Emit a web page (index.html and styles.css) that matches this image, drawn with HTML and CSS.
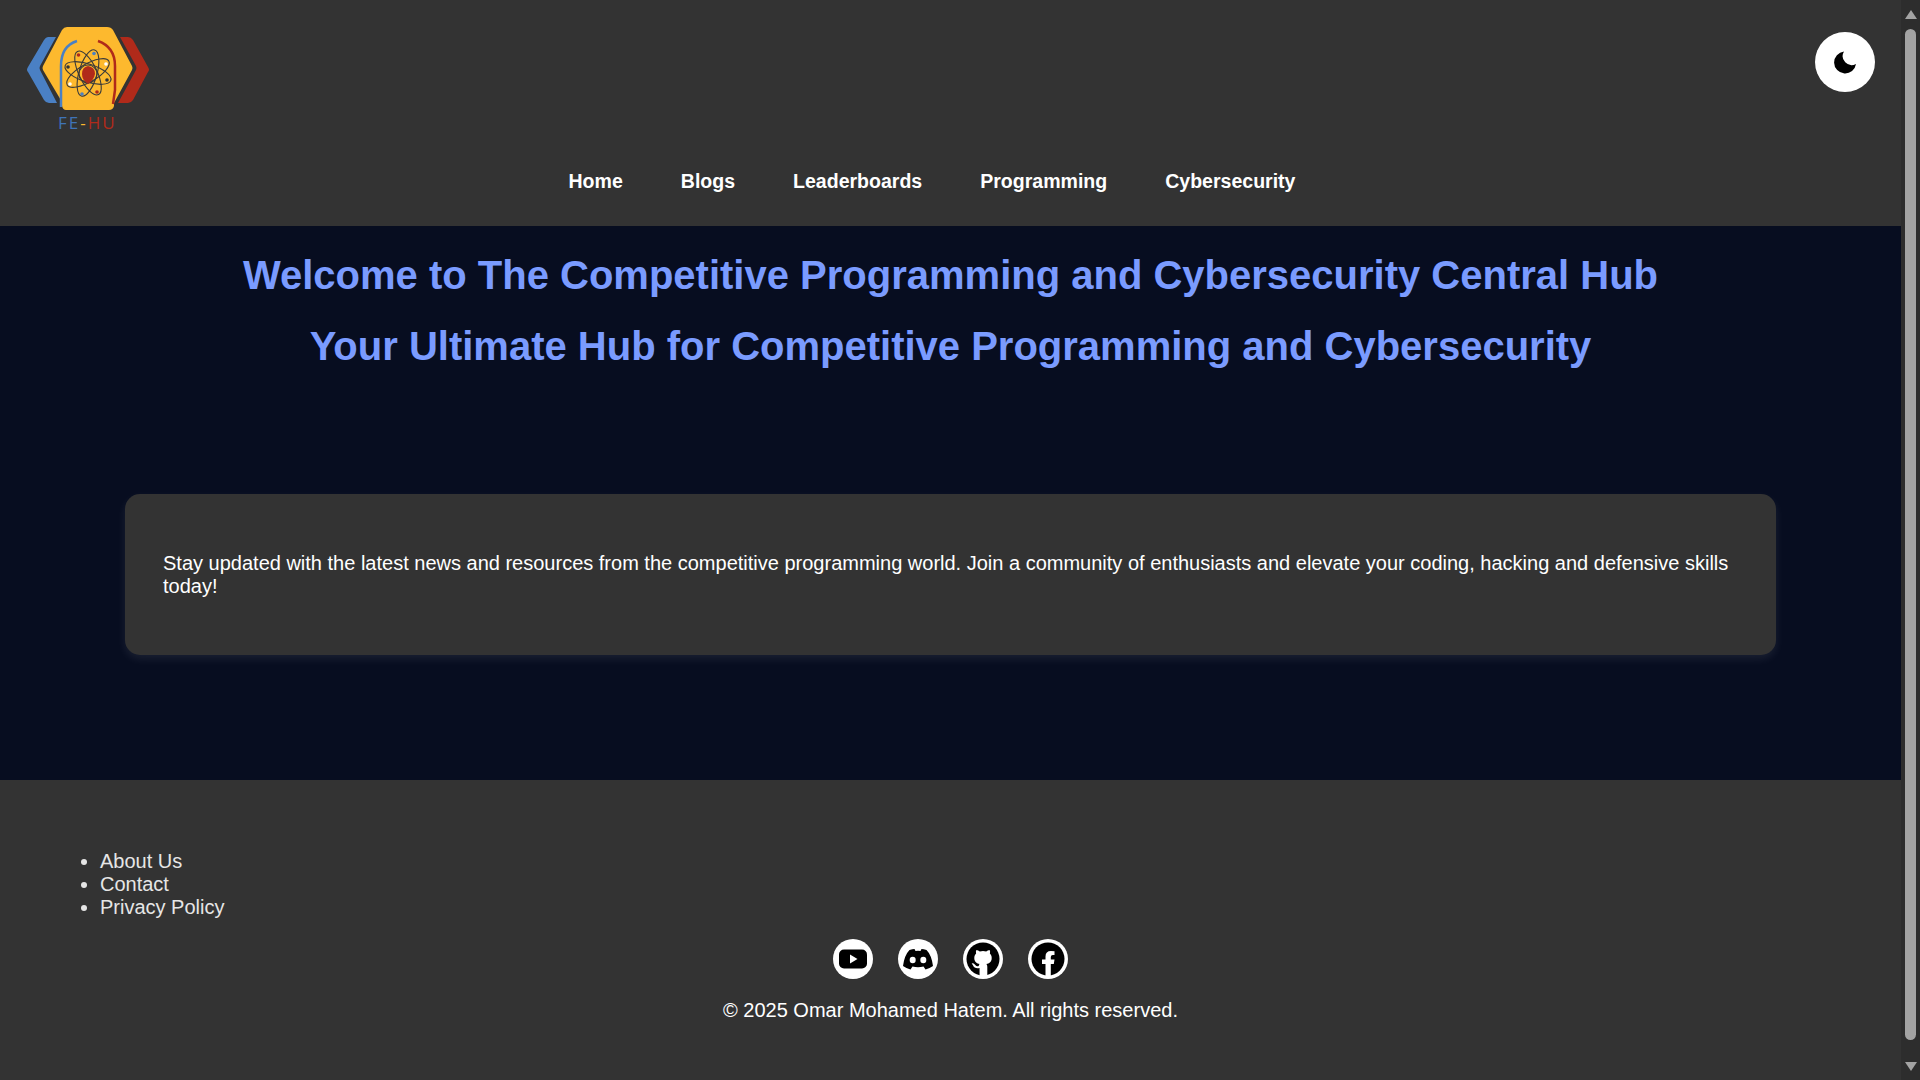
FILE: index.html
```html
<!DOCTYPE html>
<html lang="en">
<head>
<meta charset="utf-8">
<title>FE-HU</title>
<link rel="stylesheet" href="styles.css">
</head>
<body>
<div class="page">
  <header class="header">
    <div class="top">
      <a class="logo" href="#">
        <svg class="logo-mark" width="130" height="92" viewBox="23 23 130 92">
          <path d="M48 37 H56 L40 66 Q39 68 40 70 L57 103 H49 Q46 103 44 100 L28 72 Q26 70 28 67 L44 40 Q46 37 48 37Z" fill="#4a80c4"/>
          <path d="M120 37 H128 Q131 37 133 40 L148 67 Q150 70 148 72 L133 100 Q131 103 128 103 H118 L136 70 Q137 68 136 66Z" fill="#b02a1a"/>
          <path d="M67 27 H107 Q111 27 113 30 L132 66 Q133 68 132 70 L114 103 V106 Q113 110 109 110 H66 Q63 110 62 106 V102 L43 70 Q42 68 43 66 L62 30 Q64 27 67 27Z" fill="#fdb92e"/>
          <path d="M77 41 Q61 46 61 66 V107" fill="none" stroke="#4a80c4" stroke-width="2.500"/>
          <path d="M98 41 Q115 47 115 66 V90 L113 104" fill="none" stroke="#b02a1a" stroke-width="2.500"/>
          <g fill="none" stroke="#3a3a3a" stroke-width="1.100">
            <ellipse cx="88" cy="73" rx="9" ry="24" transform="rotate(-26 88 73)"/>
            <ellipse cx="88" cy="73" rx="9" ry="24" transform="rotate(16 88 73)"/>
            <ellipse cx="88" cy="73" rx="9" ry="24" transform="rotate(60 88 73)"/>
            <ellipse cx="88" cy="73" rx="9" ry="24" transform="rotate(-72 88 73)"/>
            <circle cx="88" cy="74" r="9"/>
          </g>
          <path d="M88 66 Q95 67 95 74 Q94 80 88 84 Q82 80 82 74 Q82 67 88 66Z" fill="#b02a1a"/>
          <circle cx="106" cy="64" r="1.800" fill="#fff"/><circle cx="70" cy="84" r="1.800" fill="#fff"/>
          <circle cx="94" cy="53.500" r="1.800" fill="#4a80c4"/><circle cx="82" cy="94" r="1.800" fill="#4a80c4"/>
          <circle cx="78.500" cy="55" r="1.800" fill="#b02a1a"/><circle cx="97" cy="92" r="1.800" fill="#b02a1a"/>
          <circle cx="68" cy="67" r="1.800" fill="#333"/><circle cx="107" cy="80" r="1.800" fill="#333"/>
        </svg>
        <span class="logo-text"><span class="blue">FE</span><span class="gold">-</span><span class="red">HU</span></span>
      </a>
      <button class="theme" type="button" aria-label="Toggle theme">
        <svg width="24" height="24" viewBox="0 -1 24 24"><path d="M11 .5 A11 11 0 1 0 23 13 A9 9 0 0 1 11 .5Z" fill="#000"/></svg>
      </button>
    </div>
    <nav class="nav">
      <a href="#">Home</a>
      <a href="#">Blogs</a>
      <a href="#">Leaderboards</a>
      <a href="#">Programming</a>
      <a href="#">Cybersecurity</a>
    </nav>
  </header>
  <main class="main">
    <h1>Welcome to The Competitive Programming and Cybersecurity Central Hub</h1>
    <h2>Your Ultimate Hub for Competitive Programming and Cybersecurity</h2>
    <section class="card">
      <p>Stay updated with the latest news and resources from the competitive programming world. Join a community of enthusiasts and elevate your coding, hacking and defensive skills today!</p>
    </section>
  </main>
  <footer class="footer">
    <ul class="links">
      <li><a href="#">About Us</a></li>
      <li><a href="#">Contact</a></li>
      <li><a href="#">Privacy Policy</a></li>
    </ul>
    <div class="social">
      <a href="#" aria-label="YouTube"><svg viewBox="0 0 40 40"><circle cx="20" cy="20" r="20" fill="#fff"/><rect x="6" y="10.500" width="28" height="19" rx="5" fill="#000"/><path d="M17 15.500 L24.500 20 L17 24.500Z" fill="#fff"/></svg></a>
      <a href="#" aria-label="Discord"><svg viewBox="0 0 40 40"><circle cx="20" cy="20" r="20" fill="#fff"/><path d="M11.500 11 Q14.500 10 16.500 10 L17.500 12 Q20 11.600 22.500 12 L23.500 10 Q25.500 10 28.500 11 Q33.500 16 35 27 Q31.500 29.500 27.500 30.500 L25.500 27.500 Q20 29 14.500 27.500 L12.500 30.500 Q8.500 29.500 5 27 Q6.500 16 11.500 11Z" fill="#000"/><ellipse cx="14.700" cy="21" rx="3" ry="3.300" fill="#fff"/><ellipse cx="25.300" cy="21" rx="3" ry="3.300" fill="#fff"/></svg></a>
      <a href="#" aria-label="GitHub"><svg viewBox="0 0 40 40"><circle cx="20" cy="20" r="20" fill="#fff"/><circle cx="20" cy="20" r="16.500" fill="#000"/><path transform="translate(20 20) scale(.86) translate(-20 -20)" d="M16 41 V30.500 Q10 31.500 8.500 27.500 Q8 26 6.800 25.500 Q6.500 24.800 8.500 25 Q10 25.500 11 27 Q13 29.500 15 28 Q15.300 26.500 16 25.800 Q11 25 10 20.500 Q9.300 16 12 13.500 Q11.300 11.500 12.300 9.500 Q14.500 9.500 16.300 11.300 Q20 10.300 23.700 11.300 Q25.500 9.500 27.700 9.500 Q28.700 11.500 28 13.500 Q30.700 16 30 20.500 Q29 25 24 25.800 Q25 27 25 29 V41Z" fill="#fff"/></svg></a>
      <a href="#" aria-label="Facebook"><svg viewBox="0 0 40 40"><circle cx="20" cy="20" r="20" fill="#fff"/><circle cx="20" cy="20" r="16.500" fill="#000"/><path d="M17.500 37 V25 H14 V20.500 H17.500 V17.500 Q17.500 12 23 12 Q25 12 26.500 12.300 V16 H24.800 Q22.800 16 22.800 18 V20.500 H26.500 L25.800 25 H22.800 V37Z" fill="#fff"/></svg></a>
    </div>
    <p class="copy">© 2025 Omar Mohamed Hatem. All rights reserved.</p>
  </footer>
</div>
<aside class="scrollbar" aria-hidden="true">
  <span class="arrow up"></span>
  <span class="thumb"></span>
  <span class="arrow down"></span>
</aside>
</body>
</html>
```

FILE: styles.css
```css
* { box-sizing: border-box; }
html, body { margin: 0; height: 100%; overflow: hidden; }
body {
  display: flex;
  font-family: "Liberation Sans", Arial, sans-serif;
  font-size: 20px;
  color: #fff;
  background: #333;
}
a { color: inherit; text-decoration: none; }
.page { flex: 1; min-width: 0; height: 1080px; overflow: hidden; }
.header { height: 226px; background: #333; display: flex; flex-direction: column; }
.top { height: 150px; padding: 23px 26px 0 23px; display: flex; justify-content: space-between; align-items: flex-start; }
.logo { display: flex; flex-direction: column; width: 130px; }
.logo-mark { display: block; }
.logo-text { font-family: "Open Sans", sans-serif; font-size: 17px; line-height: 18px; letter-spacing: 2px; margin-top: -1px; padding-left: 35px; }
.blue { color: #3f74b8; }
.gold { color: #fdb92e; }
.red { color: #b02a1a; }
.theme { width: 60px; height: 60px; margin-top: 9px; border: 0; padding: 0; border-radius: 50%; background: #fff; display: flex; align-items: center; justify-content: center; }
.nav { display: flex; justify-content: center; gap: 58px; font-size: 19.550px; font-weight: 700; padding-right: 37px; padding-top: 20px; }
.main { height: 554px; background: #070d20; padding-top: 1px; }
h1, h2 { margin: 0; text-align: center; color: #7a9bff; font-size: 40px; line-height: 46px; font-weight: 700; }
h1 { margin-top: 25px; }
h2 { margin-top: 25px; }
.card { margin: 125px 125px 0 125px; height: 161px; padding: 58px 38px 0; background: #333; border-radius: 15px; box-shadow: 0 4px 10px rgba(255,255,255,.08); }
.card p { margin: 0; line-height: 23px; }
.footer { background: #333; padding-top: 70px; }
.links { margin: 0; padding-left: 100px; line-height: 23px; color: #e6e6e6; }
.social { display: flex; justify-content: center; gap: 25px; margin-top: 20px; }
.social a { display: block; width: 40px; height: 40px; }
.social svg { display: block; width: 40px; height: 40px; }
.copy { margin: 20px 0 0; text-align: center; line-height: 23px; color: #fff; }
.scrollbar { width: 19px; height: 1080px; background: #2d2d2d; display: flex; flex-direction: column; align-items: center; flex: none; }
.arrow { width: 0; height: 0; border-left: 6px solid transparent; border-right: 6px solid transparent; margin: 10px 0 0; }
.up { border-bottom: 9px solid #a3a3a3; }
.down { border-top: 9px solid #a3a3a3; margin: 0 0 9px; }
.thumb { width: 11px; flex: 1; margin-top: 10px; background: #a3a3a3; border-radius: 6px; margin-bottom: 22px; }
```
